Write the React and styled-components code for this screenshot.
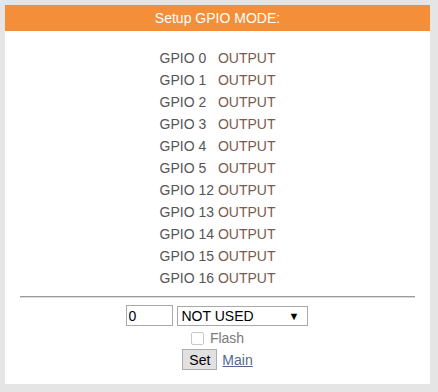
import React from 'react';
import styled, { createGlobalStyle } from 'styled-components';

const GlobalStyle = createGlobalStyle`
    html, body {
        margin: 0;
        background: #e5e5e5;
    }
    body {
        padding: 5px;
        font-family: 'Liberation Sans', Arial, sans-serif;
    }
`;

const Card = styled.div`
    width: 425px;
    background: #ffffff;
    padding-bottom: 14px;
`;

const Header = styled.div`
    height: 26px;
    line-height: 26px;
    background: #f48e38;
    color: #ffffff;
    font-size: 14px;
    text-align: center;
`;

const PinList = styled.div`
    padding-top: 16px;
    display: flex;
    flex-direction: column;
    align-items: center;
`;

const PinRow = styled.div`
    height: 22px;
    line-height: 22px;
    font-size: 14px;
    white-space: pre;
    color: #555555;
`;

const Mode = styled.span`
    color: #7a5a4e;
`;

const Divider = styled.hr`
    margin: 7px 15px 0;
    border: 0;
    border-top: 1px solid #9a9a9a;
    border-bottom: 1px solid #dcdcdc;
`;

const Controls = styled.div`
    display: flex;
    flex-direction: column;
    align-items: center;
    padding-top: 7px;
`;

const InputRow = styled.div`
    display: flex;
    gap: 4px;
    align-items: center;
    height: 21px;
    margin-right: 2px;
`;

const PinInput = styled.input`
    box-sizing: border-box;
    width: 47px;
    height: 21px;
    margin: 0;
    padding: 1px 2px;
    border: 1px solid #a9a9a9;
    font-family: 'Liberation Sans', Arial, sans-serif;
    font-size: 14px;
    color: #000;
    outline: 0;
`;

const SelectWrap = styled.div`
    position: relative;
    width: 131px;
    height: 20px;
`;

const ModeSelect = styled.select`
    box-sizing: border-box;
    appearance: none;
    width: 100%;
    height: 100%;
    margin: 0;
    padding: 0 0 0 4px;
    border: 1px solid #a9a9a9;
    border-radius: 0;
    background: #fff;
    font-family: 'Liberation Sans', Arial, sans-serif;
    font-size: 14px;
    color: #000;
    outline: 0;
`;

const Arrow = styled.span`
    position: absolute;
    right: 8px;
    top: 3px;
    font-size: 11px;
    line-height: 14px;
    color: #000;
    pointer-events: none;
`;

const FlashRow = styled.label`
    display: flex;
    align-items: center;
    gap: 6px;
    height: 20px;
    margin-top: 2px;
    font-size: 14px;
    color: #7a7a7a;
`;

const Check = styled.span`
    box-sizing: border-box;
    width: 13px;
    height: 13px;
    border: 1px solid #c8c8c8;
    border-radius: 2px;
    background: #fff;
`;

const ActionRow = styled.div`
    display: flex;
    align-items: center;
    gap: 5px;
    margin-top: 1px;
`;

const SetButton = styled.button`
    box-sizing: border-box;
    height: 21px;
    padding: 0 6px;
    margin: 0;
    border: 1px solid #adadad;
    background: #e1e1e1;
    font-family: 'Liberation Sans', Arial, sans-serif;
    font-size: 14px;
    color: #000;
`;

const MainLink = styled.a`
    font-size: 14px;
    color: #52698f;
    text-decoration: underline;
`;

const pins = [
    ['GPIO 0   ', 'OUTPUT'],
    ['GPIO 1   ', 'OUTPUT'],
    ['GPIO 2   ', 'OUTPUT'],
    ['GPIO 3   ', 'OUTPUT'],
    ['GPIO 4   ', 'OUTPUT'],
    ['GPIO 5   ', 'OUTPUT'],
    ['GPIO 12 ', 'OUTPUT'],
    ['GPIO 13 ', 'OUTPUT'],
    ['GPIO 14 ', 'OUTPUT'],
    ['GPIO 15 ', 'OUTPUT'],
    ['GPIO 16 ', 'OUTPUT'],
];

export default function App () {
    return (
        <>
            <GlobalStyle />
            <Card>
                <Header>Setup GPIO MODE:</Header>

                <PinList>
                    {pins.map(([name, mode]) => (
                        <PinRow key={name}>{name}<Mode>{mode}</Mode></PinRow>
                    ))}
                </PinList>

                <Divider />

                <Controls>
                    <InputRow>
                        <PinInput defaultValue="0" />
                        <SelectWrap>
                            <ModeSelect defaultValue="none">
                                <option value="none">NOT USED</option>
                                <option value="in">INPUT</option>
                                <option value="out">OUTPUT</option>
                            </ModeSelect>
                            <Arrow>▼</Arrow>
                        </SelectWrap>
                    </InputRow>

                    <FlashRow>
                        <Check />
                        Flash
                    </FlashRow>

                    <ActionRow>
                        <SetButton>Set</SetButton>
                        <MainLink href="#">Main</MainLink>
                    </ActionRow>
                </Controls>
            </Card>
        </>
    );
}
